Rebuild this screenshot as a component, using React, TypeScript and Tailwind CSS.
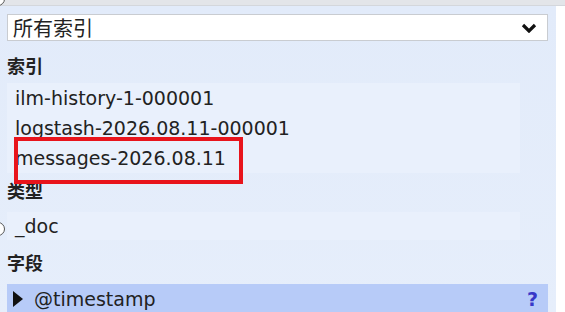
import React from 'react';

const font = { fontFamily: '"DejaVu Sans", "Noto Sans CJK SC", sans-serif' };

function Row({ children }: { children: React.ReactNode }) {
  return (
    <div className="h-[30px] flex items-center pl-[8px] mr-[28px] bg-[#e9f0fc] text-[19px] text-[#222]">
      {children}
    </div>
  );
}

function Label({ children, h }: { children: React.ReactNode; h: string }) {
  return (
    <div className={`${h} flex items-center font-bold text-[18px] text-[#222]`} style={{ fontFamily: '"Noto Sans CJK SC", sans-serif' }}>
      {children}
    </div>
  );
}

export default function App() {
  return (
    <div className="relative w-[565px] h-[312px] overflow-hidden bg-white" style={font}>
      <div className="h-[6px] bg-[#e3e5e9] border-b border-[#d4d7dc]" />
      <div className="flex h-[306px]">
        <div className="w-[556px] bg-gradient-to-b from-[#e2ebfa] to-[#e6eefb] pl-[7px] pr-[8px] pt-[8px]">
          <div className="h-[27px] bg-white border border-[#c9ccd1] flex items-center justify-between pl-[5px] pr-[10px] text-[20px] text-[#222]">
            <span style={{ fontFamily: '"Noto Sans CJK SC", sans-serif' }}>所有索引</span>
            <svg className="shrink-0 w-[16px] h-[10px]" viewBox="0 0 16 10">
              <path d="M2 2 L8 8 L14 2" fill="none" stroke="#111" strokeWidth="3.2" />
            </svg>
          </div>
          <div className="mt-[6px]">
            <Label h="h-[36px]">索引</Label>
            <Row>ilm-history-1-000001</Row>
            <Row>logstash-2026.08.11-000001</Row>
            <Row>messages-2026.08.11</Row>
            <Label h="h-[34px]">类型</Label>
            <div className="mt-[5px] h-[28px] flex items-center pl-[8px] mr-[28px] bg-[#e9f0fc] text-[19px] text-[#222]">
              _doc
            </div>
            <Label h="h-[44px]">字段</Label>
            <div className="h-[30px] flex items-center justify-between pl-[6px] pr-[10px] bg-[#b7cbf8] text-[19px] text-[#222]">
              <span className="flex items-center gap-[11px]">
                <svg className="shrink-0 w-[10px] h-[16px]" viewBox="0 0 10 16">
                  <path d="M0 0 L10 8 L0 16 Z" fill="#111" />
                </svg>
                @timestamp
              </span>
              <span className="font-bold text-[#3838c8]">?</span>
            </div>
          </div>
        </div>
        <div className="flex-1 bg-white" />
      </div>
      <div className="absolute left-[14px] top-[137px] w-[229px] h-[47px] border-[4px] border-[#e8141c]" />
      <div className="absolute -left-[9px] -top-[8px] w-[14px] h-[14px] rounded-full border border-[#555] bg-white" />
      <div className="absolute -left-[9px] top-[222px] w-[14px] h-[14px] rounded-full border border-[#555] bg-white" />
    </div>
  );
}
